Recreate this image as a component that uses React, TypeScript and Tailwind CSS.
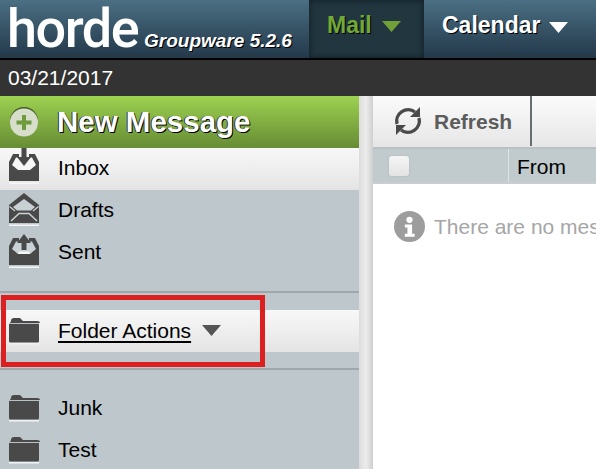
import React from 'react';

const sans = "font-['Liberation_Sans',Arial,sans-serif]";
const DARK = '#494949';

const TrayIcon = ({ up = false }: { up?: boolean }) => (
  <svg width="40" height="40" viewBox="0 0 40 40" className="block shrink-0">
    <path d="M12 9.500h16l4 7.500-6 5H14l-6-5z" fill={up ? '#c9d1d5' : '#f6f6f6'} />
    {up && <path d="M15 19.500h10l1 2.500H14z" fill="#f2f4f5" />}
    <path d="M9 6h6v3.500h-3L8 17l6 5h12l6-5-4-7.500h-3V6h6l4 8v19H5V14z" fill={DARK} />
    {up ? (
      <path d="M20 2l7 9h-4.500v7h-5v-7H13z" fill={DARK} />
    ) : (
      <path d="M17.500 0h5v9H27l-7 9-7-9h4.500z" fill={DARK} />
    )}
    <rect x="5" y="34.500" width="30" height="1.500" fill="#f4f6f7" />
  </svg>
);

const DraftsIcon = () => (
  <svg width="40" height="40" viewBox="0 0 40 40" className="block shrink-0">
    <path d="M20 3l15 12v18H5V15z" fill={DARK} />
    <path d="M20 9l11 8-4 3.500H13L9 17z" fill="#c9d1d5" />
    <path d="M7 31l8-7.500h10l8 7.500" fill="none" stroke="#ccd3d7" strokeWidth="1.500" />
    <path d="M5.500 16.500 11 21M34.500 16.500 29 21" stroke="#ccd3d7" strokeWidth="1.200" />
    <rect x="5" y="34.500" width="30" height="1.500" fill="#f4f6f7" />
  </svg>
);

const FolderIcon = () => (
  <svg width="40" height="40" viewBox="0 0 40 40" className="block shrink-0">
    <path d="M7 10q0-3 3-3h6l3 3h14q3 0 3 2H6z" fill={DARK} />
    <rect x="5" y="12" width="30" height="1" fill="#b9c1c5" />
    <path d="M5 13h30v17q0 1.500-1.500 1.500h-27Q5 31.500 5 30z" fill={DARK} />
    <rect x="5" y="32" width="30" height="1.500" fill="#f0f3f4" />
  </svg>
);

const Caret = ({ color }: { color: string }) => (
  <svg width="19" height="12" viewBox="0 0 19 12" className="block">
    <path d="M0 1h19l-9.500 11z" fill={color} />
  </svg>
);

const RefreshIcon = () => (
  <svg width="40" height="40" viewBox="0 0 40 40" fill="none" className="block shrink-0">
    <path d="M9 23A11.500 11.500 0 0 1 27 11" stroke="#4a4a4a" strokeWidth="3.400" />
    <path d="M31 17A11.500 11.500 0 0 1 13 29" stroke="#4a4a4a" strokeWidth="3.400" />
    <path d="M32 6v10h-10z" fill="#4a4a4a" />
    <path d="M8 34V24h10z" fill="#4a4a4a" />
  </svg>
);

const PlusIcon = () => (
  <svg width="30" height="30" viewBox="0 0 30 30" className="block">
    <circle cx="15" cy="14" r="14" fill="#46592a" />
    <circle cx="15" cy="15.500" r="14" fill="#d7dfcb" />
    <path d="M13 8h4v5.500h5.500v4H17V23h-4v-5.500H7.500v-4H13z" fill="#6f9a3d" />
  </svg>
);

const InfoIcon = () => (
  <svg width="31" height="31" viewBox="0 0 30 30" className="block shrink-0">
    <circle cx="15" cy="15" r="15" fill="#9d9d9d" />
    <circle cx="15" cy="8.500" r="3" fill="#fff" />
    <path d="M10.500 13h7v9h2.500v3h-9.500v-3H13v-6h-2.500z" fill="#fff" />
  </svg>
);

const Folder = ({ icon, label, active, lift }: { icon: React.ReactNode; label: string; active?: boolean; lift?: boolean }) => (
  <div className={`flex h-[42px] items-center ${lift ? 'pb-[2px]' : ''} ${active ? 'bg-gradient-to-b from-[#f8f8f8] to-[#e4e4e4]' : ''}`}>
    <div className="w-[58px] pl-[4px]">{icon}</div>
    <span className="text-[21px] text-black">{label}</span>
  </div>
);

export default function App() {
  return (
    <div className={`relative h-[469px] w-[596px] overflow-hidden bg-white ${sans}`}>
      {/* top bar */}
      <header className="flex h-[60px] border-b-[2px] border-black bg-gradient-to-b from-[#4b6f83] to-[#23394a]">
        <div className="flex w-[309px] items-end">
          <span className="mb-[1px] ml-[7px] font-['Roboto',sans-serif] text-[54px] font-medium leading-[56px] tracking-[-1.500px] text-white blur-[0.6px]">
            horde
          </span>
          <span className="mb-[7px] ml-[6px] whitespace-nowrap text-[19px] font-bold italic leading-[20px] text-white [text-shadow:1px_1px_0_#000]">
            Groupware 5.2.6
          </span>
        </div>
        <div className="flex w-[115px] items-start gap-[10px] bg-[#21363f] pl-[18px] pt-[10px] shadow-[inset_0_0_6px_#0f1c22]">
          <span className="text-[23px] font-bold leading-[30px] text-[#71a836] [text-shadow:1px_1px_0_#000]">Mail</span>
          <div className="mt-[10px]">
            <Caret color="#71a036" />
          </div>
        </div>
        <div className="flex items-start gap-[9px] pl-[18px] pt-[10px]">
          <span className="text-[23px] font-bold leading-[30px] text-white [text-shadow:1px_1px_0_#000]">Calendar</span>
          <div className="mt-[11px]">
            <Caret color="#ffffff" />
          </div>
        </div>
      </header>

      {/* date bar */}
      <div className="flex h-[36px] items-center bg-[#333333] pl-[8px] text-[21px] text-white">03/21/2017</div>

      <div className="flex h-[373px]">
        {/* sidebar */}
        <aside className="w-[359px] bg-[#bec7cc]">
          <div className="flex h-[52px] items-center bg-gradient-to-b from-[#9dd251] to-[#678c34]">
            <div className="w-[57px] pl-[9px]">
              <PlusIcon />
            </div>
            <span className="text-[29.500px] font-bold leading-none text-white [text-shadow:-1px_0_0_#333,1px_1px_0_#000]">New Message</span>
          </div>
          <Folder icon={<TrayIcon />} label="Inbox" active lift />
          <Folder icon={<DraftsIcon />} label="Drafts" lift />
          <Folder icon={<TrayIcon up />} label="Sent" lift />

          <div className="mt-[17px] h-[2px] bg-[#a0a7ab]" />
          <div className="mt-[17px] flex h-[42px] items-center bg-gradient-to-b from-[#f8f8f8] to-[#e4e4e4]">
            <div className="w-[58px] pl-[4px]">
              <FolderIcon />
            </div>
            <span className="text-[21px] text-black underline decoration-[2px] underline-offset-[3px]">Folder Actions</span>
            <div className="-mt-[3px] ml-[11px]">
              <Caret color="#555555" />
            </div>
          </div>
          <div className="mt-[16px] h-[2px] bg-[#a0a7ab]" />
          <div className="mt-[17px]">
            <Folder icon={<FolderIcon />} label="Junk" />
            <Folder icon={<FolderIcon />} label="Test" />
          </div>
        </aside>

        {/* splitter */}
        <div className="w-[14px] bg-gradient-to-r from-[#dcdcdc] via-[#ececec] to-[#cfcfcf]" />

        {/* message list */}
        <main className="min-w-0 flex-1 overflow-hidden">
          <div className="flex h-[51px] bg-gradient-to-b from-[#fbfbfb] to-[#e6e6e6]">
            <div className="flex h-[50px] w-[159px] items-center gap-[6px] border-r-[2px] border-[#666e72] pl-[15px]">
              <RefreshIcon />
              <span className="pt-[2px] text-[21px] font-bold text-[#5c5c5c]">Refresh</span>
            </div>
          </div>
          <div className="flex h-[37px] items-center border-y-[2px] border-y-[#b8c1c4] border-b-[#c8cfd2] bg-[#c1cacd]">
            <div className="ml-[16px] h-[20px] w-[20px] rounded-[3px] bg-gradient-to-b from-[#f5f5f5] to-[#e3e3e3] shadow-[0_0_2px_#aab2b5]" />
            <div className="ml-[99px] flex h-full items-center border-l border-[#dfe4e6] pl-[8px] pt-[3px] text-[21px] text-black">From</div>
          </div>
          <div className="mt-[27px] flex items-center gap-[9px] whitespace-nowrap pl-[21px]">
            <InfoIcon />
            <span className="text-[21px] text-[#a6a6a6]">There are no messages</span>
          </div>
        </main>
      </div>

      {/* red annotation box */}
      <div className="absolute left-[1px] top-[295px] h-[72px] w-[264px] border-[5px] border-[#dc2020]" />
    </div>
  );
}
